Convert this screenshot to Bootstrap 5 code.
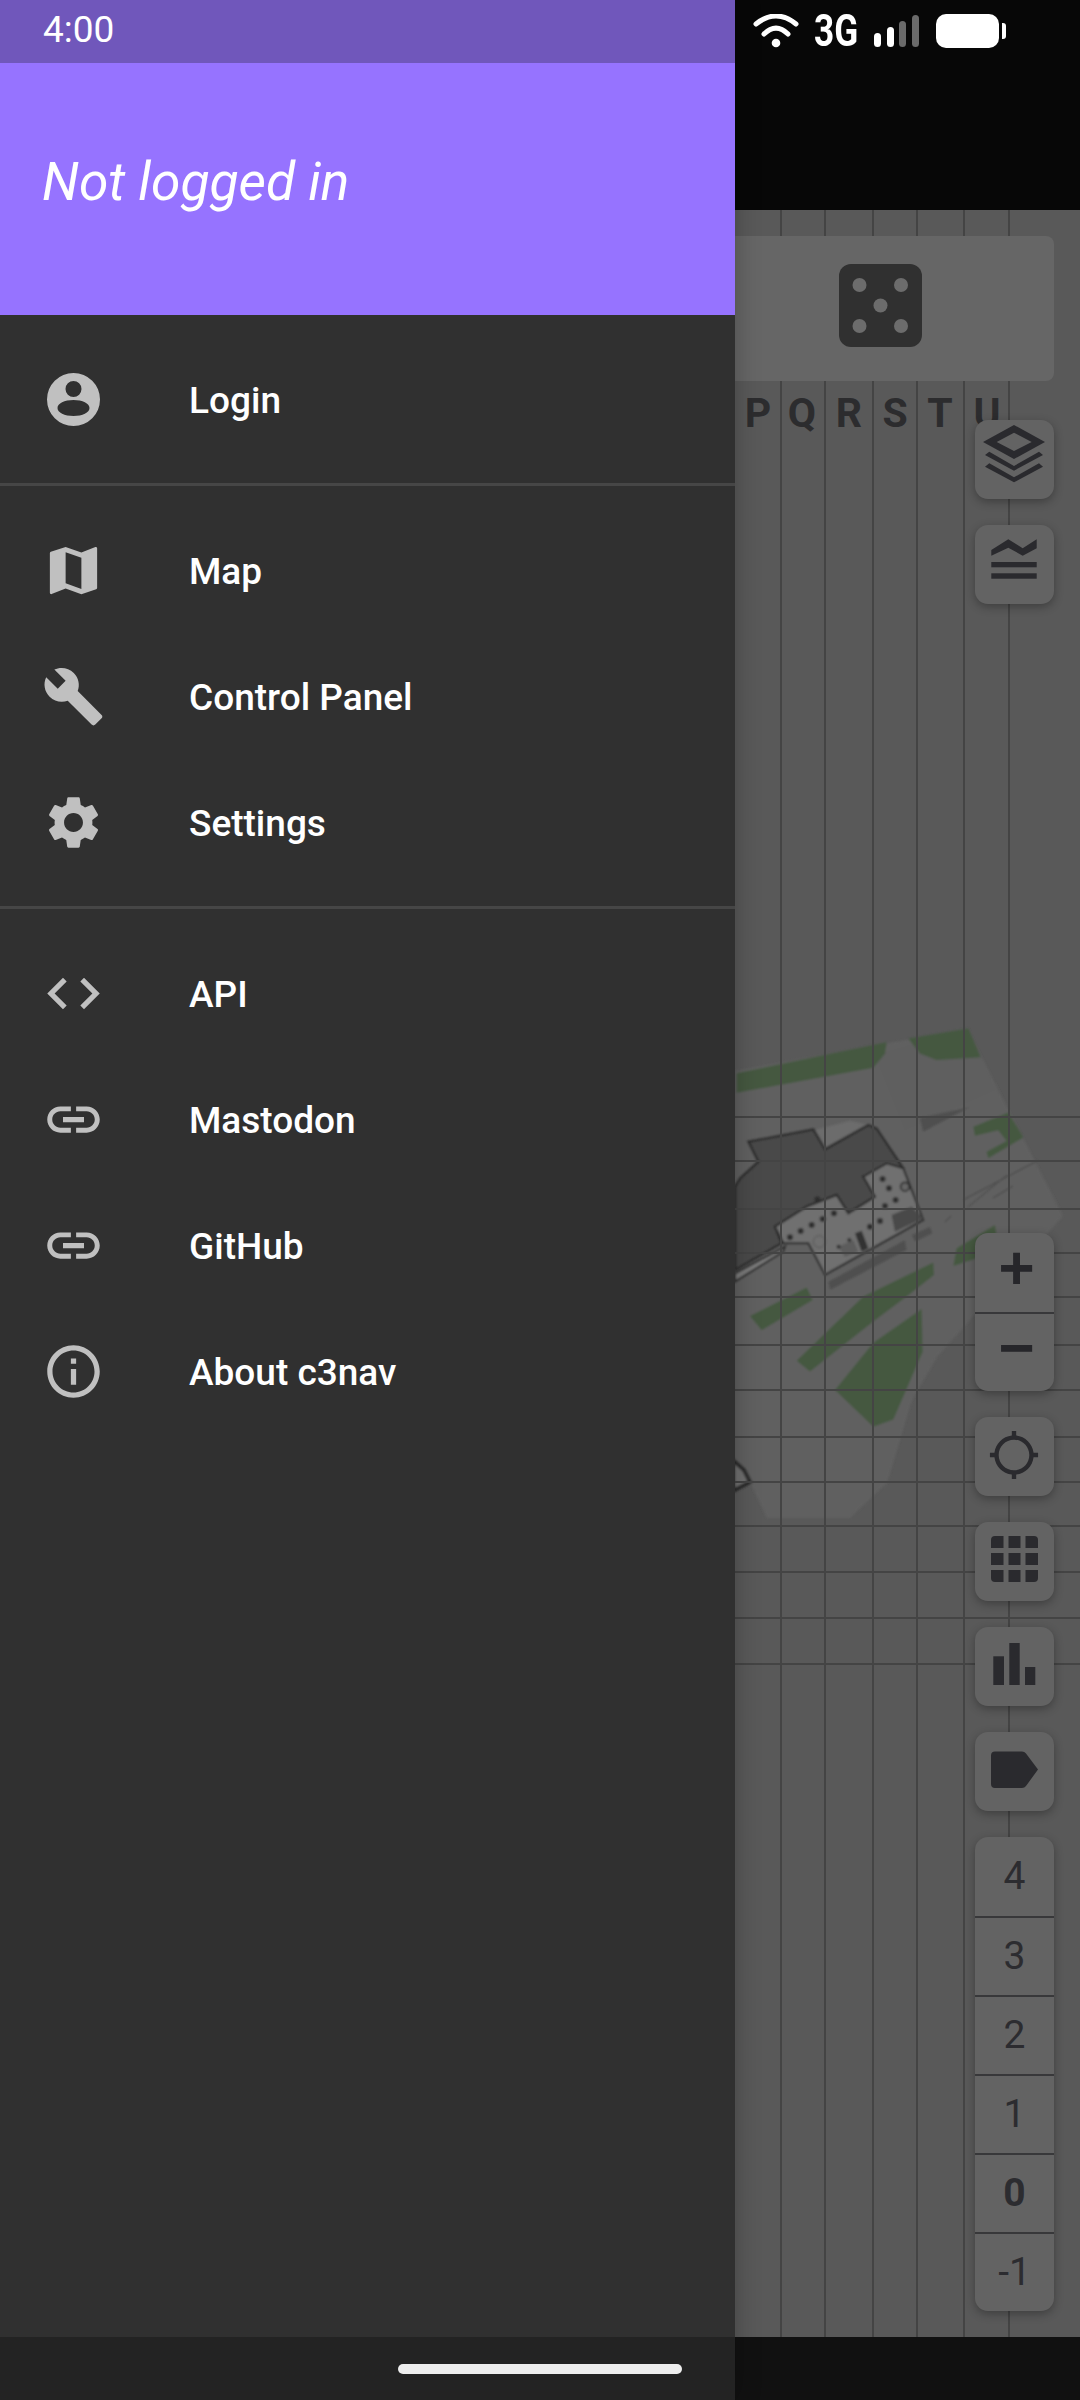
<!DOCTYPE html>
<html lang="en">
<head>
    <meta charset="UTF-8" />
    <meta name="viewport" content="width=device-width, initial-scale=1.0" />
    <title>c3nav</title>
    <link href="https://cdn.jsdelivr.net/npm/bootstrap@5.3.3/dist/css/bootstrap.min.css" rel="stylesheet" />
    <style>
        html, body {
            margin: 0;
            background: #070707;
            font-family: Roboto, "Liberation Sans", sans-serif;
        }

        .phone {
            width: 1080px;
            height: 2400px;
            overflow: hidden;
        }

        /* drawer */
        .drawer {
            position: relative;
            z-index: 2;
            width: 735px;
            background: #303030;
            box-shadow: 0 0 24px rgba(0, 0, 0, 0.25);
        }

        .drawer-status {
            height: 63px;
            padding: 0 0 5px 43px;
            background: #7057bb;
            color: #fff;
            font-size: 37px;
            line-height: 1;
        }

        .drawer-head {
            height: 252px;
            padding: 0 0 12px 42px;
            background: #9673ff;
            color: #fff;
            font-size: 53.3px;
            font-style: italic;
        }

        .drawer-section {
            padding: 21px 0;
            border-bottom: 3px solid #464646;
        }

        .drawer-item.list-group-item {
            height: 126px;
            padding: 0 0 0 42px;
            gap: 84px;
            border: 0;
            background: transparent;
            color: #fff;
            font-size: 37px;
            font-weight: 500;
        }

        .drawer-label {
            padding-top: 3px;
        }

        .drawer-item svg {
            flex: none;
            width: 63px;
            height: 63px;
            fill: #c0c0c0;
        }

        .nav-bar-left {
            height: 63px;
            padding-left: 398px;
            background: #232323;
        }

        .home-pill {
            width: 284px;
            height: 10px;
            border-radius: 5px;
            background: #eee;
        }

        /* right side, dimmed map */
        .map-side {
            width: 345px;
        }

        .status-right {
            height: 210px;
            padding: 14px 0 0 18px;
            background: #070707;
        }

        .net-label {
            width: 45px;
            margin: 0 15px 0 15px;
            color: #fff;
            font-size: 44px;
            font-weight: 700;
            line-height: 34px;
            transform: scaleX(0.8);
            transform-origin: left;
        }

        .map-area {
            position: relative;
            background: #595959;
            overflow: hidden;
        }

        .map-canvas {
            position: absolute;
            top: 0;
            left: 0;
        }

        .grid-label {
            fill: #2c2c2e;
            font-family: Roboto, sans-serif;
            font-size: 41px;
            font-weight: 700;
            text-anchor: middle;
        }

        .map-overlay {
            position: relative;
            height: 100%;
            padding: 26px 26px 26px 0;
        }

        .random-panel {
            height: 145px;
            margin-left: -28px;
            padding-bottom: 6px;
            border-radius: 0 8px 8px 0;
            background: #666;
        }

        .ctrl-stack {
            gap: 26px;
        }

        .ctrl-stack-top {
            margin-top: 39px;
        }

        .ctrl-group {
            width: 79px;
            border-radius: 13px;
            background: #636363;
            box-shadow: 0 3px 10px rgba(0, 0, 0, 0.3);
        }

        .ctrl-group > .ctrl-btn.btn {
            display: flex;
            align-items: center;
            justify-content: center;
            width: 79px;
            height: 79px;
            margin-top: 0;
            padding: 0;
            border: 0;
            border-radius: 0;
            background: transparent;
            color: #2c2c30;
            font-size: 39px;
            line-height: 1;
        }

        .ctrl-group > .ctrl-btn.btn:not(:first-child) {
            border-top: 2px solid #38383a;
        }

        .ctrl-btn svg {
            width: 79px;
            height: 79px;
            fill: #2a2a2e;
        }

        .ctrl-group > .ctrl-btn.zoom-btn.btn {
            padding: 0 0 0 4px;
            color: #26262a;
            font-family: "Liberation Mono", monospace;
            font-size: 62px;
            font-weight: 700;
        }

        .nav-bar-right {
            height: 63px;
            background: #111;
        }
    </style>
</head>
<body>

<div class="phone d-flex">

    <!-- drawer -->
    <aside class="drawer d-flex flex-column">
        <div class="drawer-status d-flex align-items-center">4:00</div>
        <div class="drawer-head d-flex align-items-center">Not logged in</div>

        <div class="drawer-section">
            <div class="list-group list-group-flush">
                <a href="#" class="drawer-item list-group-item d-flex align-items-center">
                    <svg viewBox="0 0 63 63"><path fill-rule="evenodd" d="M31.5 5a26.5 26.5 0 1 0 0 53 26.5 26.5 0 0 0 0-53zm0 8a8 8 0 1 1 0 16 8 8 0 0 1 0-16zm0 19c9 0 16 3.500 16 8s-7 8-16 8-16-3.500-16-8 7-8 16-8z"/></svg>
                    <span class="drawer-label">Login</span>
                </a>
            </div>
        </div>

        <div class="drawer-section">
            <div class="list-group list-group-flush">
                <a href="#" class="drawer-item list-group-item d-flex align-items-center">
                    <svg viewBox="0 0 24 24"><path d="M20.500 3l-.16.03L15 5.100 9 3 3.360 4.900c-.21.07-.36.25-.36.48V20.500c0 .28.22.5.5.5l.16-.03L9 18.900l6 2.100 5.640-1.900c.21-.07.36-.25.36-.48V3.500c0-.28-.22-.5-.5-.5zM15 19l-6-2.110V5l6 2.110V19z"/></svg>
                    <span class="drawer-label">Map</span>
                </a>
                <a href="#" class="drawer-item list-group-item d-flex align-items-center">
                    <svg viewBox="0 0 24 24"><path d="M22.700 19l-9.100-9.100c.9-2.300.4-5-1.500-6.900-2-2-5-2.400-7.400-1.300L9 6 6 9 1.600 4.700C.4 7.100.9 10.100 2.900 12.100c1.900 1.900 4.600 2.400 6.900 1.500l9.100 9.100c.4.4 1 .4 1.400 0l2.300-2.300c.5-.4.5-1.100.1-1.400z"/></svg>
                    <span class="drawer-label">Control Panel</span>
                </a>
                <a href="#" class="drawer-item list-group-item d-flex align-items-center">
                    <svg viewBox="0 0 24 24"><path d="M19.140 12.940c.04-.3.06-.61.06-.94 0-.32-.02-.64-.07-.94l2.030-1.580c.18-.14.23-.41.12-.61l-1.920-3.320c-.12-.22-.37-.29-.59-.22l-2.390.96c-.5-.38-1.030-.7-1.620-.94l-.36-2.540c-.04-.24-.24-.41-.48-.41h-3.840c-.24 0-.43.17-.47.41l-.36 2.540c-.59.24-1.130.57-1.620.94l-2.390-.96c-.22-.08-.47 0-.59.22L2.740 8.870c-.12.21-.08.47.12.61l2.030 1.580c-.05.3-.09.63-.09.94s.02.64.07.94l-2.030 1.580c-.18.14-.23.41-.12.61l1.920 3.320c.12.22.37.29.59.22l2.390-.96c.5.38 1.030.7 1.620.94l.36 2.540c.05.24.24.41.48.41h3.840c.24 0 .44-.17.47-.41l.36-2.540c.59-.24 1.130-.56 1.620-.94l2.390.96c.22.08.47 0 .59-.22l1.920-3.320c.12-.22.07-.47-.12-.61l-2.010-1.580zM12 15.600c-1.980 0-3.600-1.620-3.600-3.600s1.620-3.600 3.600-3.600 3.600 1.620 3.600 3.600-1.620 3.600-3.600 3.600z"/></svg>
                    <span class="drawer-label">Settings</span>
                </a>
            </div>
        </div>

        <div class="drawer-section border-bottom-0">
            <div class="list-group list-group-flush">
                <a href="#" class="drawer-item list-group-item d-flex align-items-center">
                    <svg viewBox="0 0 24 24"><path d="M9.400 16.600L4.800 12l4.600-4.600L8 6l-6 6 6 6 1.400-1.400zm5.200 0l4.600-4.600-4.600-4.600L16 6l6 6-6 6-1.400-1.400z"/></svg>
                    <span class="drawer-label">API</span>
                </a>
                <a href="#" class="drawer-item list-group-item d-flex align-items-center">
                    <svg viewBox="0 0 24 24"><path d="M3.900 12c0-1.710 1.390-3.100 3.100-3.100h4V7H7c-2.760 0-5 2.240-5 5s2.240 5 5 5h4v-1.900H7c-1.710 0-3.100-1.390-3.100-3.100zM8 13h8v-2H8v2zm9-6h-4v1.900h4c1.710 0 3.100 1.390 3.100 3.100s-1.390 3.100-3.100 3.100h-4V17h4c2.760 0 5-2.240 5-5s-2.240-5-5-5z"/></svg>
                    <span class="drawer-label">Mastodon</span>
                </a>
                <a href="#" class="drawer-item list-group-item d-flex align-items-center">
                    <svg viewBox="0 0 24 24"><path d="M3.900 12c0-1.710 1.390-3.100 3.100-3.100h4V7H7c-2.760 0-5 2.240-5 5s2.240 5 5 5h4v-1.900H7c-1.710 0-3.100-1.390-3.100-3.100zM8 13h8v-2H8v2zm9-6h-4v1.900h4c1.710 0 3.100 1.390 3.100 3.100s-1.390 3.100-3.100 3.100h-4V17h4c2.760 0 5-2.240 5-5s-2.240-5-5-5z"/></svg>
                    <span class="drawer-label">GitHub</span>
                </a>
                <a href="#" class="drawer-item list-group-item d-flex align-items-center">
                    <svg viewBox="0 0 24 24"><path d="M11 7h2v2h-2zm0 4h2v6h-2zm1-9C6.480 2 2 6.480 2 12s4.480 10 10 10 10-4.480 10-10S17.520 2 12 2zm0 18c-4.410 0-8-3.590-8-8s3.590-8 8-8 8 3.590 8 8-3.590 8-8 8z"/></svg>
                    <span class="drawer-label">About c3nav</span>
                </a>
            </div>
        </div>

        <div class="flex-grow-1"></div>
        <div class="nav-bar-left d-flex align-items-center"><div class="home-pill"></div></div>
    </aside>

    <!-- map behind the scrim -->
    <div class="map-side d-flex flex-column">
        <div class="status-right d-flex align-items-start">
            <svg width="46" height="34" viewBox="0 0 46 34">
                <g fill="none" stroke="#fff" stroke-width="5" stroke-linecap="round">
                    <path d="M3 10Q23 -6 43 10"/>
                    <path d="M11 20Q23 8 35 20"/>
                </g>
                <circle cx="23" cy="29" r="4.300" fill="#fff"/>
            </svg>
            <span class="net-label">3G</span>
            <svg width="46" height="34" viewBox="0 0 46 34">
                <rect x="0" y="19" width="7" height="14" rx="3.500" fill="#fff"/>
                <rect x="13" y="13" width="7" height="20" rx="3.500" fill="#fff"/>
                <rect x="25" y="7" width="7" height="26" rx="3.500" fill="#6a6a6a"/>
                <rect x="38" y="1" width="7" height="32" rx="3.500" fill="#6a6a6a"/>
            </svg>
            <svg class="ms-3" width="71" height="34" viewBox="0 0 71 34">
                <rect x="0" y="0" width="63" height="34" rx="10" fill="#fff"/>
                <path d="M66 9h1a3 3 0 0 1 3 3v10a3 3 0 0 1-3 3h-1z" fill="#fff"/>
            </svg>
        </div>

        <div class="map-area flex-grow-1">
            <svg class="map-canvas" width="345" height="2127" viewBox="735 210 345 2127">
                <defs><filter id="soft"><feGaussianBlur stdDeviation="1.100"/></filter></defs>
                <g filter="url(#soft)">
                    <!-- site ground -->
                    <polygon fill="#616161" points="735,1071 967,1029 1063,1216 937,1357 912,1400 887,1483 850,1518 767,1518 750,1482 735,1461"/>
                    <polygon fill="#5e5e5e" points="875,1055 967,1029 995,1090 905,1130"/>
                    <polygon fill="#505050" points="920,1118 970,1107 923,1132"/>
                    <g transform="translate(730,1000) scale(.3333,.3571)" fill="#44583f">
                        <polygon points="20,205 470,118 465,150 430,190 20,260"/>
                        <polygon points="535,108 715,80 752,160 620,168 570,150"/>
                        <polygon points="730,355 835,315 880,385 775,443 770,425 830,395 805,365 735,380"/>
                        <polygon points="670,745 680,695 795,630 800,660 735,725"/>
                        <polygon points="60,885 230,805 248,840 95,925"/>
                        <polygon points="200,1010 400,830 610,735 612,770 530,830 430,900 240,1040"/>
                        <polygon points="315,1092 430,960 575,865 578,985 490,1175 430,1195"/>
                    </g>
                    <!-- building -->
                    <g transform="translate(730,1100) scale(.3333)">
                        <polygon fill="#6c6c6c" points="255,90 285,150 415,75 360,62"/>
                        <polygon fill="#7a7a7a" stroke="#2a2a2a" stroke-width="6" points="15,545 160,455 165,440 15,520"/>
                        <polygon fill="#484848" stroke="#2a2a2a" stroke-width="7" points="15,260 30,235 85,185 55,125 250,88 285,148 415,75 440,85 520,205 400,230 435,290 355,340 320,285 230,320 135,380 155,430 15,510"/>
                        <polygon fill="#707070" stroke="#2a2a2a" stroke-width="6" points="135,380 230,320 320,285 355,340 435,290 400,230 470,190 520,205 580,360 285,525 235,430 160,430"/>
                        <polygon fill="#484848" points="485,345 545,320 580,355 495,395"/>
                        <polygon fill="#333" points="375,400 395,392 415,445 395,455"/>
                        <polygon fill="#5c5c5c" points="325,440 370,420 385,455 345,470"/>
                        <g fill="#2f2f2f">
                            <circle cx="180" cy="412" r="9"/><circle cx="212" cy="393" r="9"/><circle cx="245" cy="375" r="9"/>
                            <circle cx="278" cy="357" r="9"/><circle cx="312" cy="340" r="9"/><circle cx="458" cy="237" r="9"/>
                            <circle cx="477" cy="265" r="9"/><circle cx="497" cy="300" r="9"/><circle cx="465" cy="318" r="9"/>
                            <circle cx="420" cy="380" r="9"/><circle cx="450" cy="363" r="9"/><circle cx="326" cy="440" r="6"/>
                            <circle cx="358" cy="420" r="6"/><circle cx="262" cy="298" r="9"/>
                        </g>
                        <circle cx="268" cy="425" r="18" fill="none" stroke="#555" stroke-width="3"/>
                        <circle cx="525" cy="260" r="13" fill="#666" stroke="#2a2a2a" stroke-width="5"/>
                        <polygon fill="#505050" points="295,545 525,420 530,450 300,570"/>
                        <polygon fill="#505050" points="545,405 600,380 608,400 555,425"/>
                    </g>
                    <g fill="none" stroke="#505050" stroke-width="1.500">
                        <path d="M963 1200L1037 1161M968 1207L1007 1175M993 1198L1013 1186M945 1222L951 1216"/>
                    </g>
                    <polygon fill="#707070" stroke="#2a2a2a" stroke-width="4" points="733,1460 744,1470 750,1482 733,1491"/>
                </g>
                <!-- grid -->
                <path fill="none" stroke="#444" stroke-width="2" d="M781 210V2337M825 210V2337M873 210V2337M917 210V2337M964 210V2337M1009 210V2337M735 1117H1080M735 1161H1080M735 1209H1080M735 1253H1080M735 1297H1080M735 1345H1080M735 1390H1080M735 1437H1080M735 1482H1080M735 1526H1080M735 1572H1080M735 1618H1080M735 1664H1080"/>
                <text class="grid-label" x="758" y="427">P</text>
                <text class="grid-label" x="802" y="427">Q</text>
                <text class="grid-label" x="849" y="427">R</text>
                <text class="grid-label" x="895" y="427">S</text>
                <text class="grid-label" x="940" y="427">T</text>
                <text class="grid-label" x="987" y="427">U</text>
            </svg>

            <div class="map-overlay d-flex flex-column">
                <div class="random-panel d-flex align-items-center justify-content-center">
                    <svg width="83" height="83" viewBox="0 0 83 83">
                        <rect width="83" height="83" rx="12" fill="#303030"/>
                        <g fill="#6c6c6c">
                            <circle cx="20.500" cy="21" r="7"/><circle cx="62" cy="21" r="7"/><circle cx="41.500" cy="41.500" r="7"/>
                            <circle cx="20.500" cy="62" r="7"/><circle cx="62" cy="62" r="7"/>
                        </g>
                    </svg>
                </div>

                <div class="ctrl-stack ctrl-stack-top d-flex flex-column align-self-end">
                    <div class="btn-group-vertical ctrl-group">
                        <button class="btn ctrl-btn" aria-label="Layers">
                            <svg viewBox="0 0 79 79">
                                <path fill-rule="evenodd" d="M39 5L70 22L39 39L8 22zM39 12.700L21.700 22L39 31L56.700 22z"/>
                                <polygon points="14.300,31.700 39,46 64,31.700 68,35 39,50.700 10,35"/>
                                <polygon points="14.300,43.300 39,57.300 64,43.300 68,46.700 39,62.300 10,46.700"/>
                            </svg>
                        </button>
                    </div>
                    <div class="btn-group-vertical ctrl-group">
                        <button class="btn ctrl-btn" aria-label="Terrain">
                            <svg viewBox="0 0 79 79">
                                <polygon points="16.300,25 33.300,14.300 47.700,23.300 61.700,14.300 61.700,23.300 47.700,30.700 33.300,22.700 16.300,30.700"/>
                                <rect x="16.300" y="37" width="45.400" height="5.300"/>
                                <rect x="16.300" y="48.300" width="45.400" height="5.400"/>
                            </svg>
                        </button>
                    </div>
                </div>

                <div class="ctrl-stack d-flex flex-column align-self-end mt-auto">
                    <div class="btn-group-vertical ctrl-group">
                        <button class="btn ctrl-btn zoom-btn">+</button>
                        <button class="btn ctrl-btn zoom-btn">−</button>
                    </div>
                    <div class="btn-group-vertical ctrl-group">
                        <button class="btn ctrl-btn" aria-label="Locate">
                            <svg viewBox="0 0 79 79"><path transform="translate(12.750,11.750) scale(2.1875)" d="M20.940 11c-.46-4.170-3.770-7.480-7.940-7.940V1h-2v2.060C6.830 3.520 3.520 6.830 3.060 11H1v2h2.060c.46 4.170 3.770 7.480 7.940 7.940V23h2v-2.060c4.170-.46 7.480-3.770 7.940-7.940H23v-2h-2.060zM12 19c-3.870 0-7-3.130-7-7s3.130-7 7-7 7 3.130 7 7-3.130 7-7 7z"/></svg>
                        </button>
                    </div>
                    <div class="btn-group-vertical ctrl-group">
                        <button class="btn ctrl-btn" aria-label="Grid">
                            <svg viewBox="0 0 79 79">
                                <path d="M20 14h8.500v12H16V18a4 4 0 0 1 4-4z"/><rect x="33.500" y="14" width="12" height="12"/><path d="M50.500 14H59a4 4 0 0 1 4 4v8H50.500z"/>
                                <rect x="16" y="31" width="12.500" height="12"/><rect x="33.500" y="31" width="12" height="12"/><rect x="50.500" y="31" width="12.500" height="12"/>
                                <path d="M16 48h12.500v12H20a4 4 0 0 1-4-4z"/><rect x="33.500" y="48" width="12" height="12"/><path d="M50.500 48H63v8a4 4 0 0 1-4 4h-8.500z"/>
                            </svg>
                        </button>
                    </div>
                    <div class="btn-group-vertical ctrl-group">
                        <button class="btn ctrl-btn" aria-label="Statistics">
                            <svg viewBox="0 0 79 79">
                                <rect x="18.300" y="29.300" width="10.700" height="28.700"/>
                                <rect x="34.300" y="16" width="10.400" height="42"/>
                                <rect x="50" y="40" width="10.300" height="18"/>
                            </svg>
                        </button>
                    </div>
                    <div class="btn-group-vertical ctrl-group">
                        <button class="btn ctrl-btn" aria-label="Labels">
                            <svg viewBox="0 0 79 79"><path d="M20 19.500H47a5 5 0 0 1 4 2L63 37.500 51 54a5 5 0 0 1-4 2H20a4 4 0 0 1-4-4V23.500a4 4 0 0 1 4-4z"/></svg>
                        </button>
                    </div>
                    <div class="btn-group-vertical ctrl-group">
                        <button class="btn ctrl-btn">4</button>
                        <button class="btn ctrl-btn">3</button>
                        <button class="btn ctrl-btn">2</button>
                        <button class="btn ctrl-btn">1</button>
                        <button class="btn ctrl-btn fw-bold">0</button>
                        <button class="btn ctrl-btn">-1</button>
                    </div>
                </div>
            </div>
        </div>

        <div class="nav-bar-right"></div>
    </div>
</div>

<script src="https://cdn.jsdelivr.net/npm/bootstrap@5.3.3/dist/js/bootstrap.bundle.min.js"></script>
</body>
</html>
